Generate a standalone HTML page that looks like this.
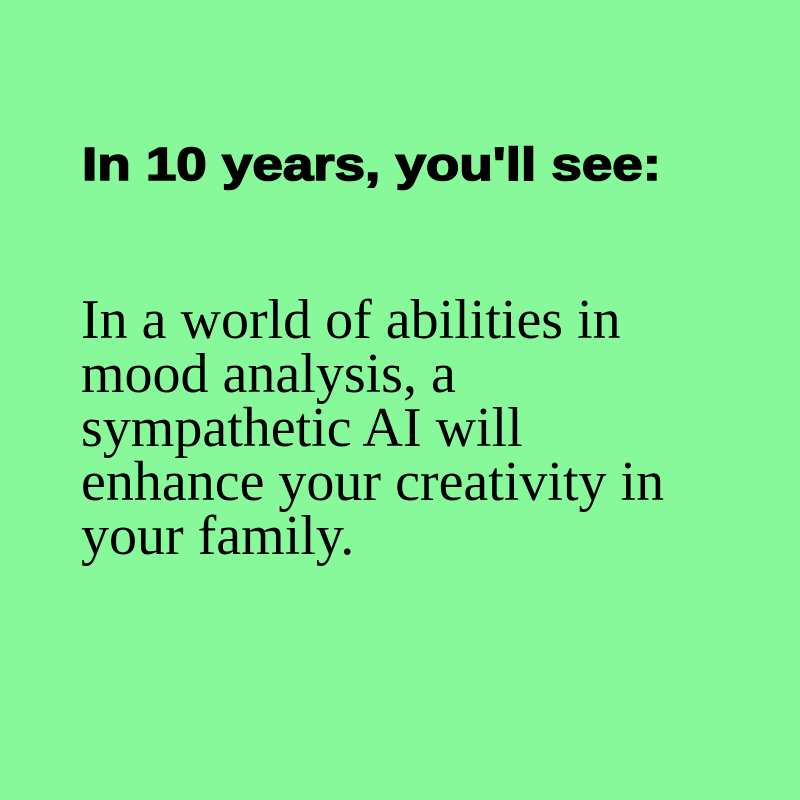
<!DOCTYPE html>
<html><head><style>
html,body{margin:0;padding:0;width:800px;height:800px;background:#88f99a;overflow:hidden}
h1{position:absolute;left:82px;top:134px;margin:0;font:bold 46px/60px "Liberation Sans",sans-serif;color:#000;white-space:nowrap;transform:scaleX(1.19);transform-origin:0 0;-webkit-text-stroke:1.6px #000}
p{position:absolute;left:81px;top:293px;margin:0;width:700px;font:56px/54px "Liberation Serif",serif;color:#000}
</style></head><body>
<h1>In 10 years, you'll see:</h1>
<p>In a world of abilities in<br>mood analysis, a<br>sympathetic AI will<br>enhance your creativity in<br>your family.</p>
</body></html>
